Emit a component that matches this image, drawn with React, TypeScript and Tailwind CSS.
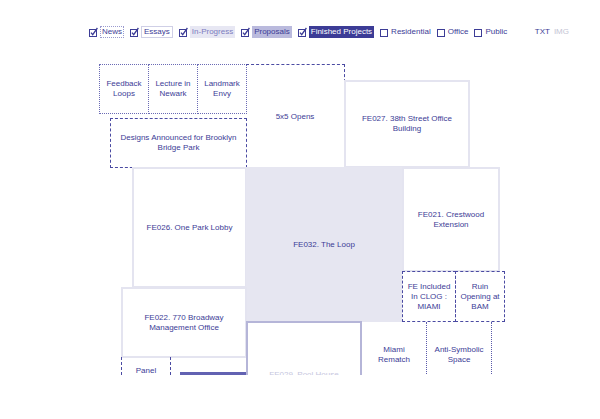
const ink = 'text-[#3c3c96]';

type Filter = {
  label: string;
  checked: boolean;
  box: string;
};

const filters: Filter[] = [
  { label: 'News', checked: true, box: 'px-[1px] py-[1px] border border-dotted border-[#9a9acf] text-[#3c3c96]' },
  { label: 'Essays', checked: true, box: 'px-[2px] py-[1px] border border-[#cfcfe6] text-[#3c3c96]' },
  { label: 'In-Progress', checked: true, box: 'px-[2px] py-[2px] bg-[#e7e7f3] text-[#7c7cc0]' },
  { label: 'Proposals', checked: true, box: 'px-[2px] py-[2px] bg-[#babadd] text-[#3c3c96]' },
  { label: 'Finished Projects', checked: true, box: 'px-[2px] py-[2px] bg-[#3c3c96] text-white' },
  { label: 'Residential', checked: false, box: 'text-[#3c3c96]' },
  { label: 'Office', checked: false, box: 'text-[#3c3c96]' },
  { label: 'Public', checked: false, box: 'text-[#3c3c96]' },
];

type Tile = {
  title: string;
  pos: string;
  look: string;
};

// tiles sit on a packed canvas; positions are the layout itself
const tiles: Tile[] = [
  { title: 'Feedback Loops', pos: 'left-[99px] top-[8px] w-[50px] h-[50px]', look: 'border border-dotted border-[#6b6bb5] px-[4px]' },
  { title: 'Lecture in Newark', pos: 'left-[148px] top-[8px] w-[50px] h-[50px]', look: 'border border-dotted border-[#6b6bb5] px-[4px]' },
  { title: 'Landmark Envy', pos: 'left-[197px] top-[8px] w-[50px] h-[50px]', look: 'border border-dotted border-[#6b6bb5] px-[4px]' },
  { title: '5x5 Opens', pos: 'left-[246px] top-[8px] w-[99px] h-[104px]', look: 'border-t border-r border-dashed border-[#4a4aa2] px-2' },
  { title: 'Designs Announced for Brooklyn Bridge Park', pos: 'left-[110px] top-[62px] w-[137px] h-[50px]', look: 'border border-dashed border-[#4a4aa2] px-2' },
  { title: 'FE027. 38th Street Office Building', pos: 'left-[344px] top-[24px] w-[126px] h-[88px]', look: 'border-2 border-[#e4e4f0] bg-white px-2' },
  { title: 'FE026. One Park Lobby', pos: 'left-[132px] top-[111px] w-[115px] h-[121px]', look: 'border-2 border-[#e4e4f0] bg-white px-2' },
  { title: 'FE032. The Loop', pos: 'left-[246px] top-[111px] w-[156px] h-[155px]', look: 'bg-[#e6e6f1] px-2' },
  { title: 'FE021. Crestwood Extension', pos: 'left-[402px] top-[111px] w-[98px] h-[105px]', look: 'border-2 border-[#e4e4f0] bg-white px-2' },
  { title: 'FE Included In CLOG : MIAMI', pos: 'left-[402px] top-[215px] w-[54px] h-[51px]', look: 'border border-dashed border-[#4a4aa2] px-[4px]' },
  { title: 'Ruin Opening at BAM', pos: 'left-[455px] top-[215px] w-[50px] h-[51px]', look: 'border border-dashed border-[#4a4aa2] px-[4px]' },
  { title: 'FE022. 770 Broadway Management Office', pos: 'left-[121px] top-[231px] w-[126px] h-[71px]', look: 'border-2 border-[#e4e4f0] bg-white px-2' },
  { title: 'Panel', pos: 'left-[121px] top-[301px] w-[50px] h-[28px]', look: 'border-x border-dashed border-[#4a4aa2] px-[4px]' },
  { title: '', pos: 'left-[180px] top-[316px] w-[67px] h-[40px]', look: 'border-t-[3px] border-[#6262b2]' },
  { title: 'FE029. Pool House', pos: 'left-[246px] top-[265px] w-[116px] h-[108px]', look: 'border-2 border-[#b5b5d8] bg-white px-2 text-[#c6c6de]' },
  { title: 'Miami Rematch', pos: 'left-[362px] top-[266px] w-[65px] h-[66px]', look: 'border-r border-dotted border-[#5a5aaa] px-2' },
  { title: 'Anti-Symbolic Space', pos: 'left-[426px] top-[266px] w-[66px] h-[66px]', look: 'border-x border-dotted border-[#5a5aaa] px-[4px]' },
];

function CheckBox({ checked }: { checked: boolean }) {
  return (
    <svg width="8" height="10" viewBox="0 0 8 10" className="shrink-0 overflow-visible">
      <rect x="0.5" y="2.5" width="7" height="7" fill="none" stroke="#3c3c96" strokeWidth="1" />
      {checked && (
        <path d="M2 5.6 L3.7 7.6 L8.4 1" fill="none" stroke="#3c3c96" strokeWidth="1.3" />
      )}
    </svg>
  );
}

export default function App() {
  return (
    <div className={`w-[600px] h-[419px] bg-white overflow-hidden pt-[26px] font-['Liberation_Sans',Arial,sans-serif] ${ink}`}>
      {/* Filter bar */}
      <div className="flex items-center h-[12px] pl-[89px] pr-[31px] text-[8px] leading-[8px] whitespace-nowrap">
        {filters.map((f) => (
          <div key={f.label} className="flex shrink-0 items-center gap-[3px] mr-[6px]">
            <CheckBox checked={f.checked} />
            <span className={f.box}>{f.label}</span>
          </div>
        ))}
        <div className="flex shrink-0 items-center gap-[4px] ml-auto">
          <span className="text-[#3c3c96]">TXT</span>
          <span className="text-[#c4c4d4]">IMG</span>
        </div>
      </div>

      {/* Project wall */}
      <div className="relative mt-[18px] h-[319px] overflow-hidden">
        {tiles.map((t, i) => (
          <div
            key={i}
            className={`absolute flex items-center justify-center text-center text-[8px] leading-[10px] ${t.pos} ${t.look}`}
          >
            {t.title}
          </div>
        ))}
      </div>
    </div>
  );
}
